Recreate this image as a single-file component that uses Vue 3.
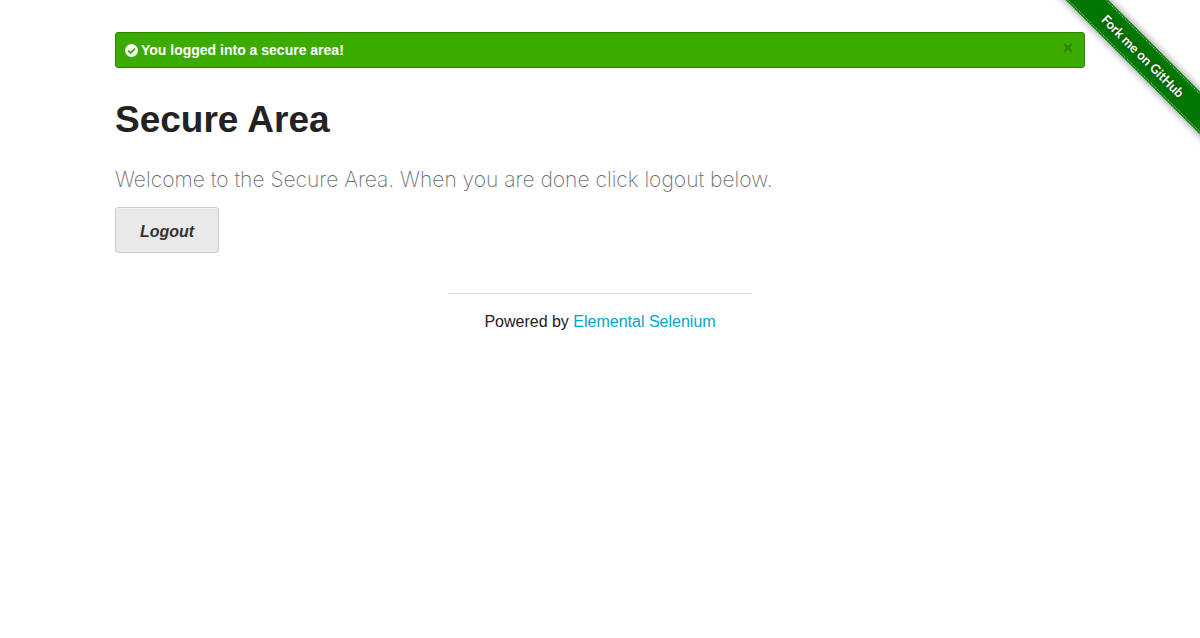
<script setup>
import { ref } from 'vue'

const showFlash = ref(true)
</script>

<template>
  <div class="page">
    <div class="ribbon-corner">
      <a class="ribbon" href="#github"><span>Fork me on GitHub</span></a>
    </div>

    <main class="row">
      <div v-if="showFlash" class="flash" role="status">
        <svg class="check" viewBox="0 0 12 12" aria-hidden="true">
          <circle cx="6" cy="6" r="6" fill="#fff" />
          <path d="M2.9 6.1 5.2 8.3 9.2 4.3" fill="none" stroke="#3cab00" stroke-width="1.8" />
        </svg>
        <span>You logged into a secure area!</span>
        <button class="close" type="button" aria-label="Close" @click="showFlash = false">×</button>
      </div>

      <h1>Secure Area</h1>
      <p class="lead">Welcome to the Secure Area. When you are done click logout below.</p>
      <a class="logout" href="#logout">Logout</a>
    </main>

    <footer>
      <hr />
      <div>Powered by <a href="#elemental-selenium">Elemental Selenium</a></div>
    </footer>
  </div>
</template>

<style>
body {
  margin: 0;
  background: #fff;
}
</style>

<style scoped>
.page {
  position: relative;
  overflow: hidden;
  padding: 32px 15px;
  color: #222;
  font-family: "Liberation Sans", Arial, sans-serif;
  font-size: 16px;
  line-height: 24px;
}

.row {
  max-width: 970px;
  margin: 0 auto;
}

.flash {
  display: flex;
  align-items: center;
  gap: 3px;
  box-sizing: border-box;
  height: 36px;
  padding: 0 11px 0 9px;
  border: 1px solid #2f8600;
  border-radius: 3px;
  background: #3cab00;
  color: #fff;
  font-size: 14px;
  font-weight: bold;
}

.check {
  width: 13px;
  height: 13px;
}

.close {
  margin: 0 0 4px auto;
  padding: 0;
  border: 0;
  background: none;
  color: #2f8306;
  font: bold 18px/18px "Liberation Sans", Arial, sans-serif;
  cursor: pointer;
}

h1 {
  margin: 25px 0 0;
  font-size: 37px;
  line-height: 54px;
}

.lead {
  margin: 15px 0 10px;
  color: #6f6f6f;
  font-family: Inter, "Liberation Sans", sans-serif;
  font-size: 21px;
  font-weight: 200;
  line-height: 35px;
}

.logout {
  display: inline-block;
  padding: 13px 24px 9px;
  border: 1px solid #ccc;
  border-radius: 3px;
  background: #e9e9e9;
  box-shadow: inset 0 1px 0 #f4f4f4;
  color: #333;
  font-size: 16px;
  font-style: italic;
  font-weight: bold;
  line-height: 22px;
  text-decoration: none;
}

footer {
  max-width: 304px;
  margin: 40px auto 0;
  text-align: center;
}

hr {
  margin: 0 0 16px;
  border: 0;
  border-top: 1px solid #ddd;
}

footer a {
  color: #00a6cf;
  text-decoration: none;
}

.ribbon-corner {
  position: absolute;
  top: 0;
  right: 0;
  width: 149px;
  height: 149px;
  overflow: hidden;
  pointer-events: none;
}

.ribbon {
  position: absolute;
  top: 41px;
  right: -63px;
  box-sizing: border-box;
  width: 240px;
  padding: 1px 0;
  background: #070;
  box-shadow: 0 0 8px rgba(0, 0, 0, 0.5);
  color: #fff;
  font: bold 13px/26px Lato, "Noto Sans", sans-serif;
  text-align: center;
  text-decoration: none;
  text-shadow: 0 0 4px rgba(0, 0, 0, 0.5);
  transform: rotate(45deg);
  pointer-events: auto;
}

.ribbon span {
  display: block;
  border: 1px dotted #6fdc98;
  border-width: 1px 0;
}
</style>
